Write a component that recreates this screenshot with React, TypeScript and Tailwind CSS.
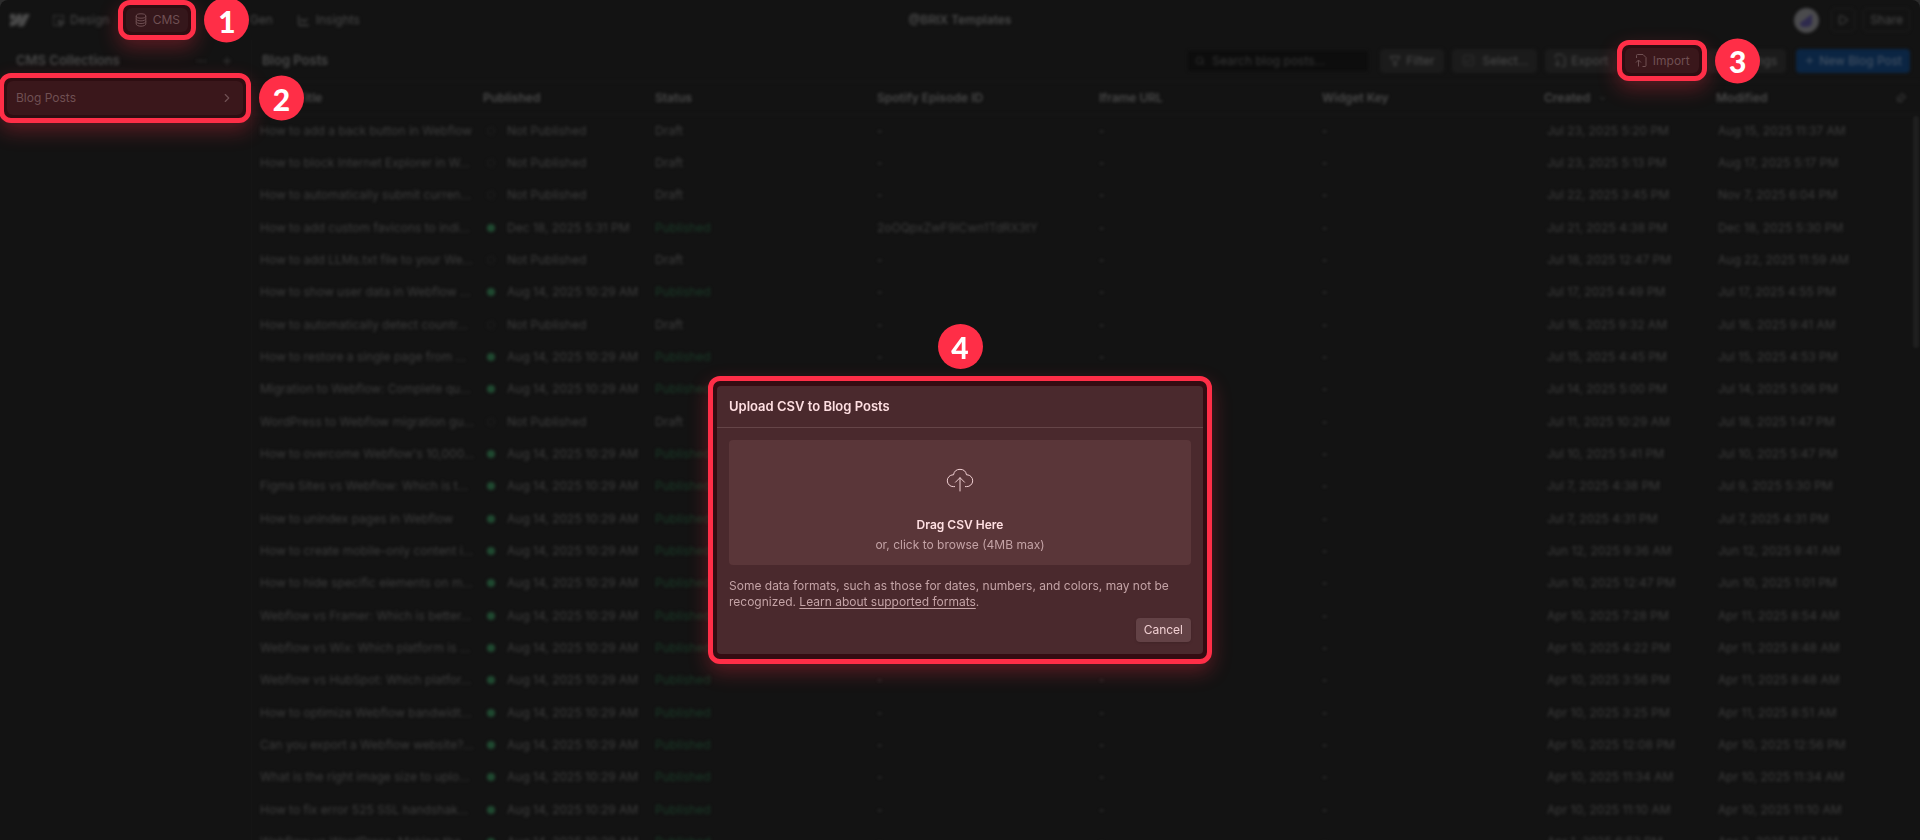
import type { ReactNode } from "react";
import {
  ChartLine,
  Check,
  ChevronDown,
  ChevronRight,
  Ellipsis,
  Filter,
  Pin,
  Play,
  Plus,
  Search,
  SquareDashedMousePointer,
} from "lucide-react";

type Post = {
  title: string;
  published?: string;
  spotify?: string;
  created: string;
  modified: string;
};

const AUG = "Aug 14, 2025 10:29 AM";

// two light passes: softer than one, but the text stays readable
const BLUR = "[filter:blur(1px)_blur(1px)]";

const posts: Post[] = [
  { title: "How to add a back button in Webflow", created: "Jul 23, 2025 5:20 PM", modified: "Aug 15, 2025 11:37 AM" },
  { title: "How to block Internet Explorer in W...", created: "Jul 23, 2025 5:13 PM", modified: "Aug 17, 2025 5:17 PM" },
  { title: "How to automatically submit curren...", created: "Jul 22, 2025 3:45 PM", modified: "Nov 7, 2025 6:04 PM" },
  {
    title: "How to add custom favicons to indi...",
    published: "Dec 18, 2025 5:31 PM",
    spotify: "2oOQpxZwF9ICwn1TdRX3tY",
    created: "Jul 21, 2025 4:38 PM",
    modified: "Dec 18, 2025 5:30 PM",
  },
  { title: "How to add LLMs.txt file to your We...", created: "Jul 18, 2025 12:47 PM", modified: "Aug 22, 2025 11:59 AM" },
  { title: "How to show user data in Webflow ...", published: AUG, created: "Jul 17, 2025 4:49 PM", modified: "Jul 17, 2025 4:55 PM" },
  { title: "How to automatically detect countr...", created: "Jul 16, 2025 9:32 AM", modified: "Jul 16, 2025 9:41 AM" },
  { title: "How to restore a single page from ...", published: AUG, created: "Jul 15, 2025 4:45 PM", modified: "Jul 15, 2025 4:53 PM" },
  { title: "Migration to Webflow: Complete qu...", published: AUG, created: "Jul 14, 2025 5:00 PM", modified: "Jul 14, 2025 5:06 PM" },
  { title: "WordPress to Webflow migration gu...", created: "Jul 11, 2025 10:29 AM", modified: "Jul 18, 2025 1:47 PM" },
  { title: "How to overcome Webflow's 10,000...", published: AUG, created: "Jul 10, 2025 5:41 PM", modified: "Jul 10, 2025 5:47 PM" },
  { title: "Figma Sites vs Webflow: Which is t...", published: AUG, created: "Jul 7, 2025 4:38 PM", modified: "Jul 9, 2025 5:30 PM" },
  { title: "How to unindex pages in Webflow", published: AUG, created: "Jul 7, 2025 4:31 PM", modified: "Jul 7, 2025 4:31 PM" },
  { title: "How to create mobile-only content i...", published: AUG, created: "Jun 12, 2025 9:36 AM", modified: "Jun 12, 2025 9:41 AM" },
  { title: "How to hide specific elements on m...", published: AUG, created: "Jun 10, 2025 12:47 PM", modified: "Jun 10, 2025 1:01 PM" },
  { title: "Webflow vs Framer: Which is better...", published: AUG, created: "Apr 10, 2025 7:28 PM", modified: "Apr 11, 2025 8:54 AM" },
  { title: "Webflow vs Wix: Which platform is ...", published: AUG, created: "Apr 10, 2025 4:22 PM", modified: "Apr 11, 2025 8:48 AM" },
  { title: "Webflow vs HubSpot: Which platfor...", published: AUG, created: "Apr 10, 2025 3:56 PM", modified: "Apr 11, 2025 8:48 AM" },
  { title: "How to optimize Webflow bandwidt...", published: AUG, created: "Apr 10, 2025 3:25 PM", modified: "Apr 11, 2025 8:51 AM" },
  { title: "Can you export a Webflow website?...", published: AUG, created: "Apr 10, 2025 12:08 PM", modified: "Apr 10, 2025 12:56 PM" },
  { title: "What is the right image size to uplo...", published: AUG, created: "Apr 10, 2025 11:34 AM", modified: "Apr 10, 2025 11:34 AM" },
  { title: "How to fix error 525 SSL handshak...", published: AUG, created: "Apr 10, 2025 11:10 AM", modified: "Apr 10, 2025 11:10 AM" },
  { title: "Webflow vs WordPress: Making the...", published: AUG, created: "Apr 1, 2025 6:53 PM", modified: "Apr 2, 2025 11:57 AM" },
];

function Step({ n, className }: { n: number; className?: string }) {
  return (
    <span
      className={`flex size-[45px] shrink-0 items-center justify-center rounded-full bg-[#ff2e47] font-[Lato,sans-serif] text-[30px] leading-none font-black text-white ${className ?? ""}`}
    >
      {n}
    </span>
  );
}

// red frame around the control of a step, with the number next to it
function Highlight({ n, className, children }: { n: number; className: string; children: ReactNode }) {
  return (
    <div className={`relative z-10 shrink-0 ${className}`}>
      <div className="flex h-full rounded-xl border-5 border-[#ff2e47] bg-[#2e0e12] p-[3px] shadow-[0_8px_20px_rgba(255,46,71,0.3)]">
        {children}
      </div>
      <Step n={n} className="absolute top-1/2 left-full ml-2 -translate-y-1/2" />
    </div>
  );
}

function DatabaseIcon() {
  return (
    <svg width="12" height="14" viewBox="0 0 12 14" fill="none" stroke="currentColor">
      <ellipse cx="6" cy="3" rx="4.8" ry="2.2" />
      <path d="M1.2 3v8c0 1.2 2.1 2.2 4.8 2.2s4.8-1 4.8-2.2V3M1.2 5.7c0 1.2 2.1 2.2 4.8 2.2s4.8-1 4.8-2.2M1.2 8.4c0 1.2 2.1 2.2 4.8 2.2s4.8-1 4.8-2.2" />
    </svg>
  );
}

function FileArrowIcon({ down }: { down?: boolean }) {
  return (
    <svg width="12" height="13" viewBox="0 0 12 13" fill="none" stroke="currentColor">
      <path d="M1.5 4V1.5q0-1 1-1H8l3 3v8q0 1-1 1H7.5" />
      {down ? <path d="M3.5 5.5v6.5M1 9.5 3.5 12 6 9.5" /> : <path d="M3.5 12.5V6M1 8.5 3.5 6 6 8.5" />}
    </svg>
  );
}

function CloudUploadIcon() {
  return (
    <svg width="28" height="27" viewBox="0 0 28 27" fill="none" stroke="currentColor" strokeLinecap="round">
      <path d="M8.6 21.6H7.4A5.9 5.9 0 0 1 7 9.8h.5a6.6 6.6 0 0 1 13 0h.5a5.9 5.9 0 0 1-.4 11.8h-1.2" />
      <path d="M14 26V12.8M9.5 17.2l4.5-4.5 4.5 4.5" />
    </svg>
  );
}

function ToolbarButton({ icon, children }: { icon?: ReactNode; children: ReactNode }) {
  return (
    <button className={`flex h-6 items-center gap-[5px] rounded bg-[#1b1b1b] px-[9px] text-[#4d4d4d] ${BLUR}`}>
      {icon}
      {children}
    </button>
  );
}

function TopBar() {
  return (
    <header className="relative flex h-10 items-center justify-between">
      <nav className="flex h-full items-center">
        <svg width="20" height="13" viewBox="0 0 20 13" fill="#4a4a4a" className={`ml-[10px] ${BLUR}`}>
          <path d="M20 0l-6.4 12.5h-6L10.3 7.3h-.1C8 10.2 4.7 12.1 0 12.5V7.4s3-.2 4.8-2H0V0h5.4v4.4h.1L7.7 0h4v4.4h.1L14.1 0z" />
        </svg>
        <a href="#design" className={`ml-[22px] flex items-center gap-[5px] ${BLUR}`}>
          <SquareDashedMousePointer size={13} strokeWidth={2} />
          Design
        </a>
        <Highlight n={1} className="ml-[9px] h-10 w-[78px]">
          <a href="#cms" className="flex flex-1 items-center justify-center gap-[6px] rounded-md bg-[#35171b] text-[#705053]">
            <DatabaseIcon />
            CMS
          </a>
        </Highlight>
        <a href="#app-gen" className={`ml-[27px] ${BLUR}`}>
          App Gen
        </a>
        <a href="#insights" className={`ml-6 flex items-center gap-[6px] ${BLUR}`}>
          <ChartLine size={13} />
          Insights
        </a>
      </nav>
      <span className={`absolute left-1/2 -translate-x-1/2 font-semibold ${BLUR}`}>@BRIX Templates</span>
      <div className={`flex items-center gap-2 pr-[10px] ${BLUR}`}>
        <span className="mr-1 flex size-[25px] items-center justify-center rounded-full bg-[#4b4b4d]">
          <svg width="15" height="15" viewBox="0 0 15 15" fill="#2e2a4d">
            <path d="M1 10 13 1v8a5 5 0 0 1-5 5H5a4 4 0 0 1-4-4z" />
          </svg>
        </span>
        <button aria-label="Preview" className="flex size-6 items-center justify-center rounded border border-[#1e1e1e]">
          <Play size={12} />
        </button>
        <button className="h-6 rounded border border-[#1e1e1e] px-[6px]">Share</button>
      </div>
    </header>
  );
}

function Sidebar() {
  return (
    <aside className="w-[252px] shrink-0 border-r border-[#151515]">
      <div className={`flex h-[33px] items-center justify-between pt-2 pr-[18px] pl-4 text-[13px] font-semibold ${BLUR}`}>
        <h2>CMS Collections</h2>
        <span className="flex gap-[14px] text-[#3d3d3d]">
          <Ellipsis size={12} />
          <Plus size={12} />
        </span>
      </div>
      <Highlight n={2} className="-ml-px h-[50px] w-[252px]">
        <a
          href="#blog-posts"
          className="flex flex-1 items-center justify-between rounded-md bg-[#3a171b] px-[9px] text-[#705053]"
        >
          Blog Posts
          <ChevronRight size={14} strokeWidth={2} />
        </a>
      </Highlight>
    </aside>
  );
}

function Toolbar() {
  return (
    <div className="flex h-[41px] items-center gap-2 px-[10px]">
      <h1 className={`mr-auto text-[13px] font-semibold ${BLUR}`}>Blog Posts</h1>
      <label className={`mr-1 flex h-5 w-[180px] items-center gap-[7px] bg-[#0d0d0d] pl-[7px] text-[#383838] ${BLUR}`}>
        <Search size={10} />
        <input
          aria-label="Search blog posts"
          placeholder="Search blog posts..."
          className="min-w-0 flex-1 bg-transparent outline-none placeholder:text-[#383838]"
        />
      </label>
      <ToolbarButton icon={<Filter size={12} />}>Filter</ToolbarButton>
      <ToolbarButton
        icon={
          <span className="mr-1 ml-[2px] flex size-[11px] items-center justify-center rounded-xs border border-[#303030]">
            <Check size={8} />
          </span>
        }
      >
        Select...
      </ToolbarButton>
      <ToolbarButton icon={<FileArrowIcon down />}>Export</ToolbarButton>
      <Highlight n={3} className="-mx-2 h-[41px] w-[90px]">
        <button className="flex flex-1 items-center justify-center gap-[6px] rounded-md bg-[#3a171b] text-[#705053]">
          <FileArrowIcon />
          Import
        </button>
      </Highlight>
      <ToolbarButton icon={<span className="w-[10px]" />}>Settings</ToolbarButton>
      <button className={`ml-[2px] flex h-6 items-center gap-1 rounded bg-[#0b2543] px-2 text-[#4a5767] ${BLUR}`}>
        <Plus size={11} />
        New Blog Post
      </button>
    </div>
  );
}

function PostsTable() {
  return (
    <table className={`w-full table-fixed border-collapse text-left whitespace-nowrap ${BLUR}`}>
      <colgroup>
        <col className="w-[223px]" />
        <col className="w-[172px]" />
        <col className="w-[222px]" />
        <col className="w-[222px]" />
        <col className="w-[223px]" />
        <col className="w-[222px]" />
        <col className="w-[172px]" />
        <col />
      </colgroup>
      <thead>
        <tr className="h-[33px] border-y border-[#171717] *:px-2 *:font-semibold">
          <th>
            <span className="pl-2">Post Title</span>
          </th>
          <th>Published</th>
          <th>Status</th>
          <th>Spotify Episode ID</th>
          <th>Iframe URL</th>
          <th>Widget Key</th>
          <th>
            <span className="flex items-center gap-2">
              Created <ChevronDown size={9} />
            </span>
          </th>
          <th>
            <span className="flex items-center justify-between pr-[6px]">
              Modified <Pin size={11} className="rotate-45" />
            </span>
          </th>
        </tr>
      </thead>
      <tbody className="text-[#3e3e3e]">
        {posts.map((post) => (
          <tr key={post.title} className="h-8 *:px-2 nth-[3n]:h-[33px]">
            <td>{post.title}</td>
            <td>
              <span className="flex items-center gap-3 pl-1">
                <span
                  className={`size-2 rounded-full ${post.published ? "bg-[#204a31]" : "border border-dashed border-[#282828]"}`}
                />
                {post.published ?? "Not Published"}
              </span>
            </td>
            <td className={post.published ? "text-[#1a3b28]" : ""}>{post.published ? "Published" : "Draft"}</td>
            <td>{post.spotify ?? "-"}</td>
            <td>-</td>
            <td>-</td>
            <td>
              <span className="pl-[3px]">{post.created}</span>
            </td>
            <td>
              <span className="pl-[2px]">{post.modified}</span>
            </td>
          </tr>
        ))}
      </tbody>
    </table>
  );
}

function UploadDialog() {
  return (
    <div className="fixed inset-0 z-20 flex flex-col items-center gap-[7px] pt-[324px]">
      <Step n={4} />
      <div className="w-[504px] rounded-xl border-5 border-[#ff2e47] bg-[#330c12] px-1 py-[5px] shadow-[0_8px_20px_rgba(255,46,71,0.3)]">
        <div role="dialog" aria-labelledby="upload-title" className="rounded bg-[#4a292d] text-[#c4a3a6]">
          <h2 id="upload-title" className="border-b border-[#654548] px-3 py-3 text-[13px] leading-[17px] font-semibold text-[#ffdfe2]">
            Upload CSV to Blog Posts
          </h2>
          <div className="p-3">
            <button className="flex h-[125px] w-full flex-col items-center rounded bg-[#5a3639] pt-[25px]">
              <span className="text-[#f0cfd2]">
                <CloudUploadIcon />
              </span>
              <span className="mt-[25px] leading-4 font-semibold text-[#ffdfe2]">Drag CSV Here</span>
              <span className="mt-1 leading-4">or, click to browse (4MB max)</span>
            </button>
            <p className="mt-[13px] leading-4">
              Some data formats, such as those for dates, numbers, and colors, may not be recognized.{" "}
              <a href="#formats" className="underline underline-offset-2">
                Learn about supported formats
              </a>
              .
            </p>
            <div className="mt-2 flex justify-end">
              <button className="h-6 rounded bg-[#634246] px-2 text-[#f0cfd2] shadow-sm">Cancel</button>
            </div>
          </div>
        </div>
      </div>
    </div>
  );
}

export default function App() {
  return (
    <div className="bg-[#2c2c2c] font-[Inter,sans-serif] text-xs text-[#4a4a4a]">
      <div className="h-screen overflow-hidden rounded-t-lg bg-[#131313]">
        <TopBar />
        <div className="flex">
          <Sidebar />
          <main className="relative min-w-0 flex-1">
            <Toolbar />
            <PostsTable />
            <span className="absolute top-[76px] right-px h-[232px] w-[6px] rounded-full bg-[#1f1f1f] blur-[1px]" />
          </main>
        </div>
      </div>
      <UploadDialog />
    </div>
  );
}
